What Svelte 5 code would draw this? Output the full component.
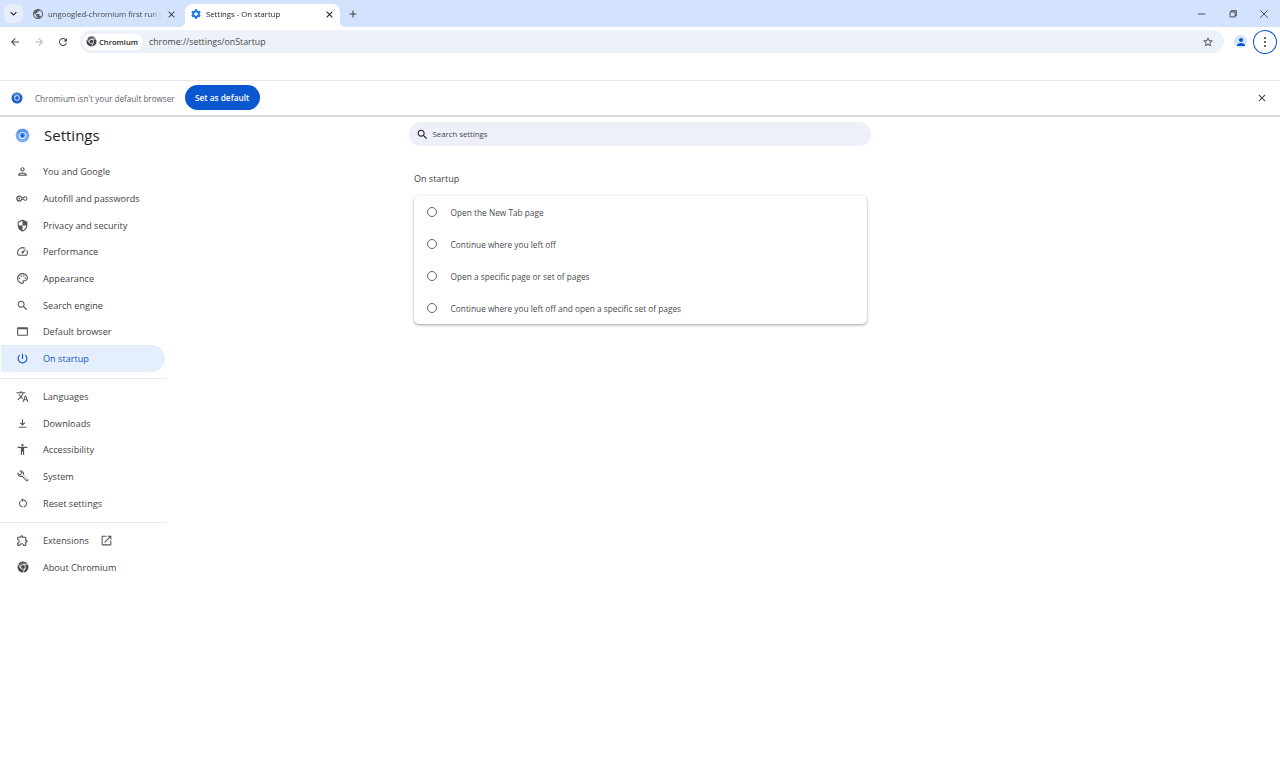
<script>
	const icons = {
		person: "M12 6c1.1 0 2 .9 2 2s-.9 2-2 2-2-.9-2-2 .9-2 2-2m0 10c2.7 0 5.8 1.29 6 2H6c.23-.72 3.31-2 6-2m0-12C9.79 4 8 5.79 8 8s1.79 4 4 4 4-1.79 4-4-1.79-4-4-4zm0 10c-2.67 0-8 1.34-8 4v2h16v-2c0-2.66-5.33-4-8-4z",
		key: "M7 7a5 5 0 1 0 0 10 5 5 0 0 0 4.58-3h1.9a3.5 3.5 0 1 0 0-4h-1.9A5 5 0 0 0 7 7zm0 2a3 3 0 0 1 2.9 2.2l.1.3h4.4l.3-.5a2 2 0 1 1 0 2l-.3-.5H10l-.1.3A3 3 0 1 1 7 9zm0 1.5a1.5 1.5 0 1 0 0 3 1.5 1.5 0 0 0 0-3z",
		shield: "M12 1L3 5v6c0 5.55 3.84 10.74 9 12 5.16-1.26 9-6.45 9-12V5l-9-4zm0 10.99h7c-.53 4.12-3.28 7.79-7 8.94V12H5V6.3l7-3.11v8.8z",
		speed: "M20.38 8.57l-1.23 1.85a8 8 0 0 1-.22 7.58H5.07A8 8 0 0 1 15.58 6.85l1.85-1.23A10 10 0 0 0 3.35 19a2 2 0 0 0 1.72 1h13.85a2 2 0 0 0 1.74-1 10 10 0 0 0-.27-10.44zM10.59 15.41a2 2 0 0 0 2.83 0l5.66-8.49-8.49 5.66a2 2 0 0 0 0 2.83z",
		palette: "M12 22C6.49 22 2 17.51 2 12S6.49 2 12 2s10 4.04 10 9c0 3.31-2.69 6-6 6h-1.77c-.28 0-.5.22-.5.5 0 .12.05.23.13.33.41.47.64 1.06.64 1.67 0 1.38-1.12 2.5-2.5 2.5zm0-18c-4.41 0-8 3.59-8 8s3.59 8 8 8c.28 0 .5-.22.5-.5 0-.16-.08-.28-.14-.35-.41-.46-.63-1.05-.63-1.65 0-1.38 1.12-2.5 2.5-2.5H16c2.21 0 4-1.79 4-4 0-3.86-3.59-7-8-7zM6.5 10a1.5 1.5 0 1 0 0 3 1.5 1.5 0 0 0 0-3zm3-4a1.5 1.5 0 1 0 0 3 1.5 1.5 0 0 0 0-3zm5 0a1.5 1.5 0 1 0 0 3 1.5 1.5 0 0 0 0-3zm3 4a1.5 1.5 0 1 0 0 3 1.5 1.5 0 0 0 0-3z",
		search: "M15.5 14h-.79l-.28-.27C15.41 12.59 16 11.11 16 9.5 16 5.91 13.09 3 9.5 3S3 5.91 3 9.5 5.91 16 9.5 16c1.61 0 3.09-.59 4.23-1.57l.27.28v.79l5 4.99L20.49 19l-4.99-5zm-6 0C7.01 14 5 11.99 5 9.5S7.01 5 9.5 5 14 7.01 14 9.5 11.99 14 9.5 14z",
		browser: "M20 4H4c-1.11 0-2 .9-2 2v12c0 1.1.89 2 2 2h16c1.1 0 2-.9 2-2V6c0-1.1-.89-2-2-2zm0 14H4V8h16v10z",
		power: "M13 3h-2v10h2V3zm4.83 2.17l-1.42 1.42C17.99 7.86 19 9.81 19 12c0 3.87-3.13 7-7 7s-7-3.13-7-7c0-2.19 1.01-4.14 2.58-5.42L6.17 5.17C4.23 6.82 3 9.26 3 12c0 4.97 4.03 9 9 9s9-4.03 9-9c0-2.74-1.23-5.18-3.17-6.83z",
		translate: "M12.87 15.07l-2.54-2.51.03-.03c1.74-1.94 2.98-4.17 3.71-6.53H17V4h-7V2H8v2H1v1.99h11.17C11.5 7.92 10.44 9.75 9 11.35 8.07 10.32 7.3 9.19 6.69 8h-2c.73 1.63 1.73 3.17 2.98 4.56l-5.09 5.02L4 19l5-5 3.11 3.11.76-2.04zM18.5 10h-2L12 22h2l1.12-3h4.75L21 22h2l-4.5-12zm-2.62 7l1.62-4.33L19.12 17h-3.24z",
		download: "M12 16l-5-5 1.4-1.45L11 12.15V4h2v8.15l2.6-2.6L17 11l-5 5zM5 20v-2h14v2z",
		access: "M12 2c1.1 0 2 .9 2 2s-.9 2-2 2-2-.9-2-2 .9-2 2-2zm9 7h-6v13h-2v-6h-2v6H9V9H3V7h18v2z",
		wrench: "M22.7 19l-9.1-9.1c.9-2.3.4-5-1.5-6.9-2-2-5-2.4-7.4-1.3L9 6 6 9 1.6 4.7C.4 7.1.9 10.1 2.9 12.1c1.9 1.9 4.6 2.4 6.9 1.5l9.1 9.1c.4.4 1 .4 1.4 0l2.3-2.3c.5-.4.5-1.1.1-1.4zM19.6 20.6l-9.4-9.4c-.6.5-1.4.8-2.3.8-1.6.2-3.1-.4-4.2-1.5-.7-.7-1.1-1.5-1.2-2.4l3.5 3.4 5.8-5.8L8.4 2.4c.9.2 1.8.6 2.4 1.3 1.2 1.2 1.7 2.9 1.4 4.5l-.4.9 9.5 9.5z",
		reset: "M12 5V2L8 6l4 4V7c3.31 0 6 2.69 6 6 0 2.97-2.17 5.43-5 5.91v2.02c3.95-.49 7-3.85 7-7.93 0-4.42-3.58-8-8-8zm-6 8c0-1.65.67-3.15 1.76-4.24L6.34 7.34C4.9 8.79 4 10.79 4 13c0 4.08 3.05 7.44 7 7.93v-2.02c-2.83-.48-5-2.94-5-5.91z",
		extension: "M10.5 4.5c.28 0 .5.22.5.5v2h6v6h2c.28 0 .5.22.5.5s-.22.5-.5.5h-2v6h-2.12c-.68-1.75-2.39-3-4.38-3s-3.7 1.25-4.38 3H4v-2.12c1.75-.68 3-2.39 3-4.38 0-1.99-1.24-3.7-2.99-4.38L4 7h6V5c0-.28.22-.5.5-.5m0-2C9.12 2.5 8 3.62 8 5H4c-1.1 0-1.99.9-1.99 2v3.8h.29c1.49 0 2.7 1.21 2.7 2.7s-1.21 2.7-2.7 2.7H2V20c0 1.1.9 2 2 2h3.8v-.3c0-1.49 1.21-2.7 2.7-2.7s2.7 1.21 2.7 2.7v.3H17c1.1 0 2-.9 2-2v-4c1.38 0 2.5-1.12 2.5-2.5S20.38 11 19 11V7c0-1.1-.9-2-2-2h-4c0-1.38-1.12-2.5-2.5-2.5z",
		external: "M19 19H5V5h7V3H5c-1.11 0-2 .9-2 2v14c0 1.1.89 2 2 2h14c1.1 0 2-.9 2-2v-7h-2v7zM14 3v2h3.59l-9.83 9.83 1.41 1.41L19 6.41V10h2V3h-7z",
		globe: "M12 2C6.48 2 2 6.48 2 12s4.48 10 10 10 10-4.48 10-10S17.52 2 12 2zm-1 17.93c-3.95-.49-7-3.85-7-7.93 0-.62.08-1.21.21-1.79L9 15v1c0 1.1.9 2 2 2v1.93zm6.9-2.54c-.26-.81-1-1.39-1.9-1.39h-1v-3c0-.55-.45-1-1-1H8v-2h2c.55 0 1-.45 1-1V7h2c1.1 0 2-.9 2-2v-.41c2.93 1.19 5 4.06 5 7.41 0 2.08-.8 3.97-2.1 5.39z",
		gear: "M19.14 12.94c.04-.3.06-.61.06-.94 0-.32-.02-.64-.07-.94l2.03-1.58a.49.49 0 0 0 .12-.61l-1.92-3.32a.488.488 0 0 0-.59-.22l-2.39.96c-.5-.38-1.03-.7-1.62-.94l-.36-2.54a.484.484 0 0 0-.48-.41h-3.84c-.24 0-.43.17-.47.41l-.36 2.54c-.59.24-1.13.57-1.62.94l-2.39-.96c-.22-.08-.47 0-.59.22L2.74 8.87c-.12.21-.08.47.12.61l2.03 1.58c-.05.3-.09.63-.09.94s.02.64.07.94l-2.03 1.58a.49.49 0 0 0-.12.61l1.92 3.32c.12.22.37.29.59.22l2.39-.96c.5.38 1.03.7 1.62.94l.36 2.54c.05.24.24.41.48.41h3.84c.24 0 .44-.17.47-.41l.36-2.54c.59-.24 1.13-.56 1.62-.94l2.39.96c.22.08.47 0 .59-.22l1.92-3.32c.12-.22.07-.47-.12-.61l-2.01-1.58zM12 15.6c-1.98 0-3.6-1.62-3.6-3.6s1.62-3.6 3.6-3.6 3.6 1.62 3.6 3.6-1.62 3.6-3.6 3.6z",
		star: "M22 9.24l-7.19-.62L12 2 9.19 8.63 2 9.24l5.46 4.73L5.82 21 12 17.27 18.18 21l-1.63-7.03L22 9.24zM12 15.4l-3.76 2.27 1-4.28-3.32-2.88 4.38-.38L12 6.1l1.71 4.04 4.38.38-3.32 2.88 1 4.28L12 15.4z",
		reload: "M17.65 6.35C16.2 4.9 14.21 4 12 4c-4.42 0-7.99 3.58-7.99 8s3.57 8 7.99 8c3.73 0 6.84-2.55 7.73-6h-2.08c-.82 2.33-3.04 4-5.65 4-3.31 0-6-2.69-6-6s2.69-6 6-6c1.66 0 3.14.69 4.22 1.78L13 11h7V4l-2.35 2.35z",
		back: "M20 11H7.83l5.59-5.59L12 4l-8 8 8 8 1.41-1.41L7.83 13H20v-2z",
		forward: "M4 13h12.17l-5.59 5.59L12 20l8-8-8-8-1.41 1.41L16.17 11H4v2z",
		close: "M19 6.41L17.59 5 12 10.59 6.41 5 5 6.41 10.59 12 5 17.59 6.41 19 12 13.41 17.59 19 19 17.59 13.41 12z",
		plus: "M19 13h-6v6h-2v-6H5v-2h6V5h2v6h6v2z",
		chevron: "M7.41 8.59L12 13.17l4.59-4.58L18 10l-6 6-6-6z",
		account: "M12 12c2.21 0 4-1.79 4-4s-1.79-4-4-4-4 1.79-4 4 1.79 4 4 4zm0 2c-2.67 0-8 1.34-8 4v2h16v-2c0-2.66-5.33-4-8-4z"
	};

	const navGroups = [
		[
			{ label: "You and Google", icon: "person" },
			{ label: "Autofill and passwords", icon: "key", size: 15 },
			{ label: "Privacy and security", icon: "shield" },
			{ label: "Performance", icon: "speed" },
			{ label: "Appearance", icon: "palette" },
			{ label: "Search engine", icon: "search" },
			{ label: "Default browser", icon: "browser" },
			{ label: "On startup", icon: "power", active: true }
		],
		[
			{ label: "Languages", icon: "translate" },
			{ label: "Downloads", icon: "download" },
			{ label: "Accessibility", icon: "access" },
			{ label: "System", icon: "wrench", size: 12 },
			{ label: "Reset settings", icon: "reset", size: 12 }
		]
	];

	const startupOptions = [
		"Open the New Tab page",
		"Continue where you left off",
		"Open a specific page or set of pages",
		"Continue where you left off and open a specific set of pages"
	];
</script>

{#snippet icon(name, size, color)}
	<svg class="icon" viewBox="0 0 24 24" width={size} height={size} fill={color}><path d={icons[name]} /></svg>
{/snippet}

{#snippet logo(size, ring, inner, segment, lines = false)}
	<svg class="icon" viewBox="0 0 24 24" width={size} height={size}>
		<circle cx="12" cy="12" r="11" fill={ring} />
		<path d="M12 7h9.5A11 11 0 0 0 3.4 5.2L8 13A5 5 0 0 1 12 7z" fill={segment} />
		{#if lines}
			<path d="M12 6.6h10M7.3 14.7L2.3 6M16.7 14.7L11.7 23" stroke="#fff" stroke-width="1.6" fill="none" />
		{/if}
		<circle cx="12" cy="12" r="5.4" fill="#fff" />
		<circle cx="12" cy="12" r="3.9" fill={inner} />
	</svg>
{/snippet}

<div class="window">
	<header class="tabstrip">
		<button class="tab-search">{@render icon("chevron", 13, "#1f1f1f")}</button>
		<div class="tab">
			{@render icon("globe", 12, "#5b5e63")}
			<span class="tab-title">ungoogled-chromium first run page</span>
			{@render icon("close", 11, "#3c4043")}
		</div>
		<div class="tab current">
			{@render icon("gear", 12, "#1a73e8")}
			<span class="tab-title">Settings - On startup</span>
			{@render icon("close", 11, "#1f1f1f")}
		</div>
		<div class="new-tab">{@render icon("plus", 12, "#3c4043")}</div>
		<div class="window-controls">
			<svg viewBox="0 0 12 12" width="10" height="10"><path d="M1 6h9" stroke="#333" fill="none" /></svg>
			<svg viewBox="0 0 12 12" width="10" height="10"><path d="M2.5 3.5h6v6h-6zM4 3.5V2h6v6H8.5" stroke="#333" fill="none" /></svg>
			<svg viewBox="0 0 12 12" width="10" height="10"><path d="M1.5 1.5l9 9M10.5 1.5l-9 9" stroke="#333" fill="none" /></svg>
		</div>
	</header>

	<div class="toolbar">
		<div class="nav-buttons">
			{@render icon("back", 12, "#474747")}
			{@render icon("forward", 12, "#b4b6b9")}
			{@render icon("reload", 12, "#474747")}
		</div>
		<div class="omnibox">
			<div class="chip">
				{@render logo(11, "#3c4043", "#3c4043", "#5f6368", true)}
				<span>Chromium</span>
			</div>
			<span class="url">chrome://settings/onStartup</span>
			<span class="star">{@render icon("star", 12, "#474747")}</span>
		</div>
		<div class="avatar">{@render icon("account", 12, "#0b57d0")}</div>
		<div class="menu">
			<i></i><i></i><i></i>
		</div>
	</div>

	<div class="bookmark-band"></div>

	<div class="infobar">
		{@render logo(12, "#1a5fc4", "#1a5fc4", "#4a86e0")}
		<span class="info-text">Chromium isn't your default browser</span>
		<button class="set-default">Set as default</button>
		<span class="info-close">{@render icon("close", 12, "#3c4043")}</span>
	</div>

	<div class="page">
		<aside class="sidebar">
			<div class="brand">
				{@render logo(15, "#7baaf7", "#1a73e8", "#5b95f0")}
				<h1>Settings</h1>
			</div>
			{#each navGroups as group}
				<nav class="group">
					{#each group as item}
						<div class="nav-item" class:active={item.active}>
							<span class="nav-icon">{@render icon(item.icon, item.size ?? 13, item.active ? "#0b57d0" : "#555")}</span>
							<span>{item.label}</span>
						</div>
					{/each}
				</nav>
			{/each}
			<nav class="group last">
				<div class="nav-item">
					<span class="nav-icon">{@render icon("extension", 13, "#555")}</span>
					<span>Extensions</span>
					<span class="external">{@render icon("external", 13, "#555")}</span>
				</div>
				<div class="nav-item">
					<span class="nav-icon">{@render logo(12, "#474747", "#474747", "#5f6368", true)}</span>
					<span>About Chromium</span>
				</div>
			</nav>
		</aside>

		<main class="content">
			<div class="searchbox">
				{@render icon("search", 13, "#1f1f1f")}
				<span>Search settings</span>
			</div>
			<h2>On startup</h2>
			<section class="card">
				{#each startupOptions as option}
					<div class="option">
						<span class="radio"></span>
						<span>{option}</span>
					</div>
				{/each}
			</section>
		</main>
	</div>
</div>

<style>
	:global(body) {
		background: #fff;
		overflow: hidden;
	}

	.window {
		width: 1280px;
		height: 773px;
		display: flex;
		flex-direction: column;
		font-family: "Open Sans", "Noto Sans", sans-serif;
		color: #1f1f1f;
		overflow: hidden;
	}

	.icon {
		flex: none;
		display: block;
	}

	.tabstrip {
		flex: none;
		height: 27px;
		background: #d3e3fd;
		display: flex;
		align-items: flex-end;
		padding-left: 4px;
	}

	.tab-search {
		width: 19px;
		height: 19px;
		margin-bottom: 4px;
		padding: 0;
		border: 0;
		border-radius: 6px;
		background: #e6eefc;
		display: flex;
		align-items: center;
		justify-content: center;
	}

	.tab {
		width: 155px;
		height: 23px;
		padding: 0 5px 3px 9px;
		box-sizing: border-box;
		display: flex;
		align-items: center;
		gap: 4px;
		font-size: 7.75px;
		color: #444746;
		position: relative;
	}

	.tab:nth-child(2) {
		width: 162px;
		padding-left: 9px;
		padding-right: 8px;
	}

	.tab.current {
		background: #fff;
		border-radius: 8px 8px 0 0;
		color: #1f1f1f;
		padding-left: 5px;
		padding-right: 5px;
	}

	.tab.current::before,
	.tab.current::after {
		content: "";
		position: absolute;
		bottom: 0;
		width: 6px;
		height: 6px;
		background: radial-gradient(circle at 0 0, #d3e3fd 6px, #fff 6.5px);
	}

	.tab.current::before {
		left: -6px;
	}

	.tab.current::after {
		right: -6px;
		background: radial-gradient(circle at 100% 0, #d3e3fd 6px, #fff 6.5px);
	}

	.tab-title {
		flex: 1;
		min-width: 0;
		white-space: nowrap;
		overflow: hidden;
		mask-image: linear-gradient(to right, #000 90%, transparent);
	}

	.new-tab {
		margin: 0 0 7px 7px;
	}

	.window-controls {
		margin: 0 11px 8px auto;
		display: flex;
		gap: 21px;
	}

	.toolbar {
		flex: none;
		height: 27px;
		background: #fff;
		display: flex;
		align-items: center;
		padding: 3px 3px 1px 9px;
		box-sizing: border-box;
	}

	.nav-buttons {
		display: flex;
		gap: 12px;
		margin-right: 11px;
	}

	.omnibox {
		width: 1145px;
		height: 23px;
		background: #edf2fa;
		border-radius: 12px;
		display: flex;
		align-items: center;
		padding: 0 10px 0 3px;
		box-sizing: border-box;
	}

	.chip {
		width: 60px;
		height: 16px;
		background: #fff;
		border-radius: 8px;
		display: flex;
		align-items: center;
		gap: 2px;
		padding-left: 3px;
		box-sizing: border-box;
		font-size: 7.6px;
		font-weight: 600;
		color: #1f1f1f;
	}

	.url {
		margin-left: 6px;
		font-size: 8.8px;
		color: #444746;
	}

	.star {
		margin-left: auto;
	}

	.avatar {
		width: 13px;
		height: 13px;
		margin-left: 10px;
		border-radius: 50%;
		background: #d3e3fd;
		display: flex;
		align-items: center;
		justify-content: center;
	}

	.menu {
		width: 24px;
		height: 24px;
		margin-left: 6px;
		border: 1.3px solid #0b57d0;
		border-radius: 50%;
		box-sizing: border-box;
		display: flex;
		flex-direction: column;
		align-items: center;
		justify-content: center;
		gap: 2px;
	}

	.menu i {
		width: 2px;
		height: 2px;
		border-radius: 50%;
		background: #333;
	}

	.bookmark-band {
		flex: none;
		height: 26px;
		border-bottom: 1px solid #e8e8e8;
	}

	.infobar {
		flex: none;
		height: 34px;
		display: flex;
		align-items: center;
		padding-left: 11px;
		background: #fff;
		border-bottom: 2px solid #dcdcdc;
	}

	.info-text {
		margin-left: 12px;
		font-size: 8.15px;
		color: #5f6368;
	}

	.set-default {
		margin: 0 0 2px 10px;
		width: 75px;
		height: 25px;
		padding: 0;
		border: 0;
		border-radius: 13px;
		background: #0b57d0;
		color: #fff;
		font: 600 8.3px "Open Sans", "Noto Sans", sans-serif;
	}

	.info-close {
		margin-left: auto;
		margin-right: 12px;
	}

	.page {
		flex: 1;
		display: flex;
		min-height: 0;
	}

	.sidebar {
		flex: none;
		width: 167px;
	}

	.brand {
		height: 36px;
		display: flex;
		align-items: center;
		gap: 14.5px;
		padding-left: 14.5px;
		box-sizing: border-box;
		margin-bottom: 5.5px;
	}

	h1 {
		margin: 0;
		font-size: 15px;
		font-weight: 400;
		color: #1f1f1f;
	}

	.group {
		padding-bottom: 5.5px;
		margin-bottom: 4.5px;
		border-bottom: 1px solid #e8eaed;
	}

	.group.last {
		border: 0;
	}

	.nav-item {
		height: 26.7px;
		width: 164px;
		margin-left: 1px;
		padding-left: 14px;
		box-sizing: border-box;
		display: flex;
		align-items: center;
		gap: 13px;
		font-size: 9.15px;
		font-weight: 500;
		color: #3f4246;
		border-radius: 0 14px 14px 0;
	}

	.nav-item.active {
		background: #e5eefc;
		color: #0b57d0;
	}

	.nav-icon {
		flex: none;
		width: 15px;
		display: flex;
		justify-content: center;
	}

	.external {
		margin-left: -2px;
	}

	.content {
		flex: 1;
		padding: 5px 0 0 242px;
	}

	.searchbox {
		width: 462px;
		height: 24px;
		background: #edf0f9;
		border-radius: 12px;
		display: flex;
		align-items: center;
		gap: 3.5px;
		padding-left: 7px;
		box-sizing: border-box;
		font-size: 7.8px;
		color: #444746;
	}

	h2 {
		margin: 25px 0 9px 5px;
		font-size: 9px;
		line-height: 16px;
		font-weight: 400;
		color: #3c4043;
	}

	.card {
		width: 453px;
		margin-left: 5px;
		border-radius: 5px;
		background: #fff;
		box-shadow: 0 1px 2px rgba(60, 64, 67, 0.3), 0 1px 3px 1px rgba(60, 64, 67, 0.15);
	}

	.option {
		height: 32px;
		display: flex;
		align-items: center;
		padding-left: 12.5px;
		gap: 13.5px;
		font-size: 8.3px;
		color: #474a4e;
	}

	.radio {
		flex: none;
		width: 8.6px;
		height: 8.6px;
		border: 1.4px solid #5f6368;
		border-radius: 50%;
	}
</style>
